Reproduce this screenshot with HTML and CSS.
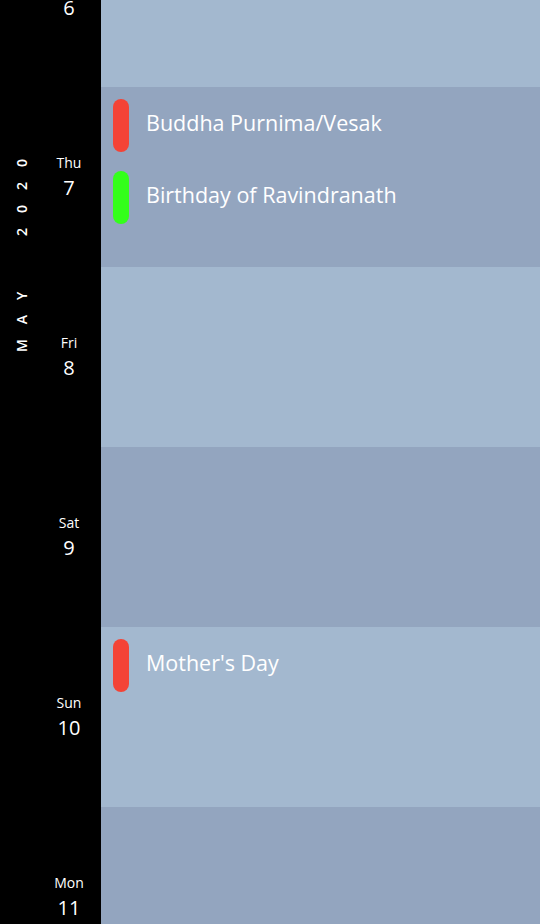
FILE: index.html
```html
<!DOCTYPE html>
<html>
<head>
<meta charset="utf-8">
<link rel="stylesheet" href="styles.css">
</head>
<body>
<div class="page">
  <div class="month-col">
    <div class="month">MAY&nbsp;2020</div>
  </div>
  <div class="rows">
    <div class="row light">
      <div class="day"><span class="dname">Wed</span><span class="dnum">6</span></div>
      <div class="events"></div>
    </div>
    <div class="row dark">
      <div class="day"><span class="dname">Thu</span><span class="dnum">7</span></div>
      <div class="events">
        <div class="event"><span class="pill red"></span><span class="etext">Buddha Purnima/Vesak</span></div>
        <div class="event"><span class="pill green"></span><span class="etext">Birthday of Ravindranath</span></div>
      </div>
    </div>
    <div class="row light">
      <div class="day"><span class="dname">Fri</span><span class="dnum">8</span></div>
      <div class="events"></div>
    </div>
    <div class="row dark">
      <div class="day"><span class="dname">Sat</span><span class="dnum">9</span></div>
      <div class="events"></div>
    </div>
    <div class="row light">
      <div class="day"><span class="dname">Sun</span><span class="dnum">10</span></div>
      <div class="events">
        <div class="event"><span class="pill red"></span><span class="etext">Mother's Day</span></div>
      </div>
    </div>
    <div class="row dark">
      <div class="day"><span class="dname">Mon</span><span class="dnum">11</span></div>
      <div class="events"></div>
    </div>
  </div>
</div>
</body>
</html>
```
FILE: styles.css
```css
html, body {
  margin: 0;
  padding: 0;
  background: #000;
  overflow: hidden;
}
body {
  width: 540px;
  height: 924px;
  font-family: "Open Sans", sans-serif;
  color: #fff;
}
.page {
  display: flex;
  height: 924px;
  overflow: hidden;
}
.month-col {
  width: 44px;
  flex: none;
  background: #000;
  display: flex;
  justify-content: center;
  align-items: flex-start;
  padding-top: 144px;
}
.month {
  writing-mode: vertical-rl;
  transform: rotate(180deg);
  font-size: 14px;
  font-weight: 600;
  letter-spacing: 15px;
  word-spacing: 22px;
  line-height: 1;
  white-space: nowrap;
}
.rows {
  flex: 1;
  margin-top: -93px;
  display: flex;
  flex-direction: column;
}
.row {
  height: 180px;
  flex: none;
  display: flex;
}
.day {
  width: 50px;
  padding-right: 7px;
  flex: none;
  background: #000;
  display: flex;
  flex-direction: column;
  align-items: center;
  justify-content: center;
}
.dname {
  font-size: 14px;
  line-height: 20px;
}
.dnum {
  font-size: 20px;
  line-height: 30px;
  margin-bottom: -1px;
}
.events {
  flex: 1;
  padding: 12px 12px 0 12px;
  display: flex;
  flex-direction: column;
  gap: 19px;
}
.light .events { background: #a3b8cf; }
.dark .events { background: #93a5bf; }
.event {
  display: flex;
  align-items: center;
  height: 53px;
}
.pill {
  width: 16px;
  height: 53px;
  border-radius: 8px;
  flex: none;
}
.red { background: #f44336; }
.green { background: #33ff1a; }
.etext {
  margin-left: 17px;
  margin-top: -6px;
  font-size: 21.5px;
  color: #fff;
}
```
